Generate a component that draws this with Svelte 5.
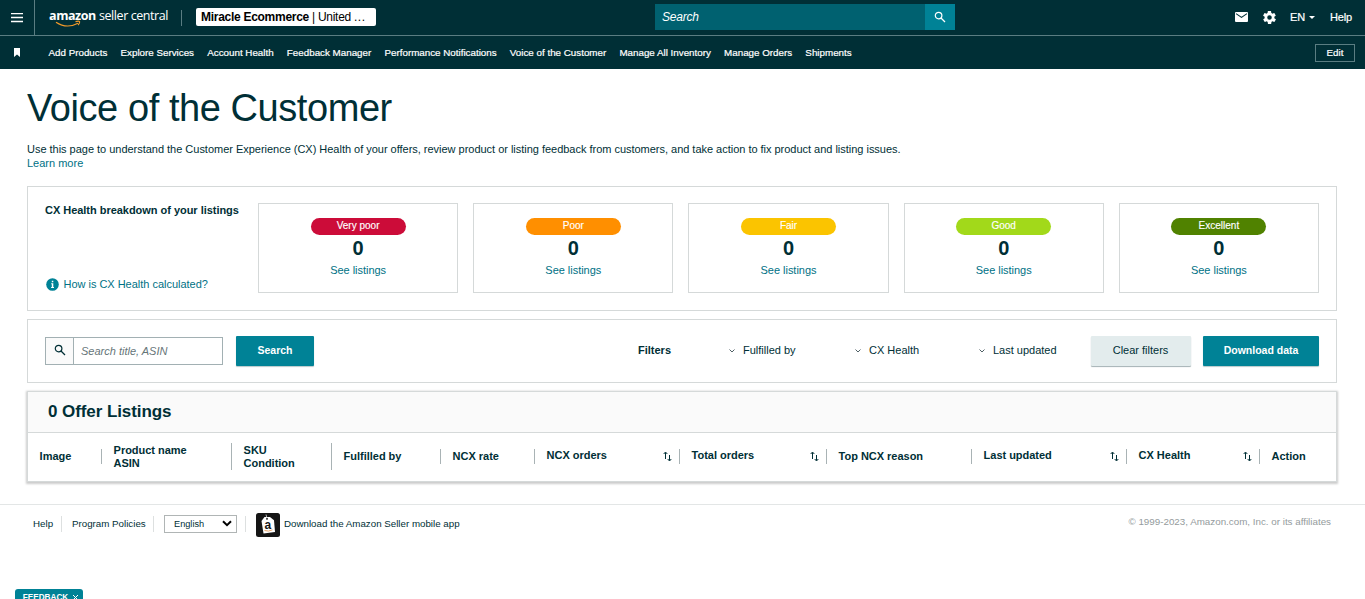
<script lang="ts">
	interface Rating {
		label: string;
		kind: string;
		count: number;
	}

	interface Column {
		lines: string[];
		sortable?: boolean;
	}

	const navLinks = [
		'Add Products',
		'Explore Services',
		'Account Health',
		'Feedback Manager',
		'Performance Notifications',
		'Voice of the Customer',
		'Manage All Inventory',
		'Manage Orders',
		'Shipments'
	];

	const ratings: Rating[] = [
		{ label: 'Very poor', kind: 'very-poor', count: 0 },
		{ label: 'Poor', kind: 'poor', count: 0 },
		{ label: 'Fair', kind: 'fair', count: 0 },
		{ label: 'Good', kind: 'good', count: 0 },
		{ label: 'Excellent', kind: 'excellent', count: 0 }
	];

	const filters = ['Fulfilled by', 'CX Health', 'Last updated'];

	const columns: Column[] = [
		{ lines: ['Image'] },
		{ lines: ['Product name', 'ASIN'] },
		{ lines: ['SKU', 'Condition'] },
		{ lines: ['Fulfilled by'] },
		{ lines: ['NCX rate'] },
		{ lines: ['NCX orders'], sortable: true },
		{ lines: ['Total orders'], sortable: true },
		{ lines: ['Top NCX reason'] },
		{ lines: ['Last updated'], sortable: true },
		{ lines: ['CX Health'], sortable: true },
		{ lines: ['Action'] }
	];

	let query = $state('');
	let title = $state('');
</script>

{#snippet magnifier()}
	<svg class="magnifier" viewBox="0 0 12 12" aria-hidden="true">
		<circle cx="4.6" cy="4.6" r="3.3" />
		<path d="M7 7l4 4" />
	</svg>
{/snippet}

<header>
	<div class="topbar">
		<button type="button" class="menu" aria-label="Menu">
			<svg width="12" height="10" viewBox="0 0 12 10"><path d="M0 .5h12M0 4.5h12M0 8.5h12" /></svg>
		</button>
		<a class="logo" href="#home">
			<b>amazon</b><span>seller central</span>
			<svg class="smile" width="27" height="8" viewBox="0 0 27 8">
				<path d="M1 2.2c7 4.6 15 4.8 22 1" />
				<path d="M20.5 1.6c2-.6 3.6-.6 4 0s-.2 2-1.4 3.6" />
			</svg>
		</a>
		<button type="button" class="account"><b>Miracle Ecommerce</b> | United <span>...</span></button>
		<form class="search">
			<input type="text" placeholder="Search" bind:value={query} />
			<button type="button" aria-label="Search">{@render magnifier()}</button>
		</form>
		<div class="tools">
			<svg class="mail" width="13" height="10" viewBox="0 0 13 10">
				<rect width="13" height="10" rx="1" fill="#fff" />
				<path d="M1 1.6l5.5 3.8L12 1.6" fill="none" stroke="#002f36" stroke-width="1.1" />
			</svg>
			<svg class="gear" width="13" height="13" viewBox="2 2 20 20">
				<path
					fill="#fff"
					d="M19.4 13c0-.3.1-.6.1-1s0-.7-.1-1l2.1-1.6c.2-.2.2-.4.1-.6l-2-3.5c-.1-.2-.4-.3-.6-.2l-2.5 1c-.5-.4-1.1-.7-1.7-1l-.4-2.6c0-.3-.2-.5-.5-.5h-4c-.2 0-.4.2-.5.4l-.4 2.7c-.6.2-1.1.6-1.7 1l-2.500-1c-.2-.1-.5 0-.6.2l-2 3.500c-.1.2-.1.5.1.6L4.6 11c0 .3-.1.6-.1 1s0 .7.1 1l-2.1 1.6c-.2.2-.2.4-.1.6l2 3.500c.1.2.4.3.6.2l2.500-1c.5.4 1.1.7 1.7 1l.4 2.6c0 .3.2.5.5.5h4c.2 0 .5-.2.5-.4l.4-2.7c.6-.2 1.1-.6 1.7-1l2.500 1c.2.1.5 0 .6-.2l2-3.500c.1-.2.1-.5-.1-.6zM12 15.5a3.5 3.5 0 1 1 0-7 3.500 3.500 0 0 1 0 7z"
				/>
			</svg>
			<span class="lang">EN<i></i></span>
			<span class="help">Help</span>
		</div>
	</div>
	<nav>
		<svg class="bookmark" width="6" height="9" viewBox="0 0 6 9"><path d="M0 0h6v9L3 6.5 0 9z" fill="#fff" /></svg>
		<ul>
			{#each navLinks as link}
				<li>{link}</li>
			{/each}
		</ul>
		<button type="button" class="edit">Edit</button>
	</nav>
</header>

<main>
	<h1>Voice of the Customer</h1>
	<p class="intro">
		Use this page to understand the Customer Experience (CX) Health of your offers, review product or listing
		feedback from customers, and take action to fix product and listing issues.
	</p>
	<a class="learn" href="#learn">Learn more</a>

	<section class="panel breakdown">
		<div class="about">
			<h2>CX Health breakdown of your listings</h2>
			<a href="#how">
				<svg width="13" height="13" viewBox="0 0 13 13">
					<circle cx="6.5" cy="6.5" r="6.3" fill="#008296" />
					<path d="M5.800 2.7h1.500v1.500H5.800zM5.200 5.300h2.100v3.800h.7v1H5.100v-1h.7V6.300h-.6z" fill="#fff" />
				</svg>
				<span>How is CX Health calculated?</span>
			</a>
		</div>
		{#each ratings as rating}
			<div class="card">
				<span class="pill {rating.kind}">{rating.label}</span>
				<strong>{rating.count}</strong>
				<a href="#listings">See listings</a>
			</div>
		{/each}
	</section>

	<section class="panel toolbar">
		<div class="field">
			<span class="addon">{@render magnifier()}</span>
			<input type="text" placeholder="Search title, ASIN" bind:value={title} />
		</div>
		<button type="button" class="primary find">Search</button>
		<b class="caption">Filters</b>
		<div class="filters">
			{#each filters as filter}
				<span class="filter">
					<svg width="6" height="4" viewBox="0 0 6 4"><path d="M.5.5L3 3 5.5.5" /></svg>
					{filter}
				</span>
			{/each}
		</div>
		<button type="button" class="clear">Clear filters</button>
		<button type="button" class="primary download">Download data</button>
	</section>

	<section class="listings">
		<h3>0 Offer Listings</h3>
		<div class="columns">
			{#each columns as column}
				<div class="column" class:sortable={column.sortable} class:tall={column.lines.length > 1}>
					<div>
						{#each column.lines as line}
							<div>{line}</div>
						{/each}
					</div>
					{#if column.sortable}
						<svg width="9" height="11" viewBox="0 0 9 11">
							<path d="M2.5 8V1.500M.7 3L2.500 1l1.800 2M6.500 4v5.500M4.700 8l1.800 2 1.800-2" />
						</svg>
					{/if}
				</div>
			{/each}
		</div>
	</section>
</main>

<footer>
	<span class="item first">Help</span>
	<span class="item policies">Program Policies</span>
	<span class="item language">
		<button type="button">
			English
			<svg width="10" height="7" viewBox="0 0 10 7"><path d="M1 1.2l4 4 4-4" /></svg>
		</button>
	</span>
	<svg class="app" width="24" height="24" viewBox="0 0 24 24">
		<rect width="24" height="24" rx="2.5" fill="#151515" />
		<path d="M5.500 8l3-4h5.500l4 3.200L19 19 7.500 20.500z" fill="#fff" />
		<circle cx="11" cy="5.800" r="1" fill="#151515" />
		<path d="M11 5.500L10 1.500" stroke="#ddd" stroke-width=".8" />
		<text x="8.600" y="15.500">a</text>
		<path d="M8.500 17.500q4 1.500 8-.7" fill="none" stroke="#e8a66b" />
	</svg>
	<span class="mobile">Download the Amazon Seller mobile app</span>
	<span class="copyright">© 1999-2023, Amazon.com, Inc. or its affiliates</span>
</footer>

<button type="button" class="feedback">
	FEEDBACK
	<svg width="7" height="7" viewBox="0 0 7 7"><path d="M1 1l5 5M6 1L1 6" /></svg>
</button>

<style>
	:global(body) {
		height: 599px;
		overflow: hidden;
		font-family: 'Liberation Sans', Arial, sans-serif;
		font-size: 11px;
		color: #002f36;
		background: #fff;
	}

	:global(#app *) {
		box-sizing: border-box;
	}

	button,
	input {
		margin: 0;
		padding: 0;
		border: 0;
		border-radius: 0;
		outline: 0;
		font: inherit;
		color: inherit;
		background: none;
	}

	a {
		color: #007185;
		text-decoration: none;
	}

	.magnifier {
		width: 12px;
		height: 12px;
		fill: none;
		stroke: currentColor;
		stroke-width: 1.2;
	}

	header {
		color: #fff;
		background: #002f36;
	}

	.topbar {
		display: flex;
		align-items: center;
		height: 36px;
		border-bottom: 1px solid #5a7d82;
	}

	.menu {
		display: flex;
		align-items: center;
		justify-content: center;
		width: 35px;
		height: 35px;
		border-right: 1px solid #5a7d82;

		& svg {
			stroke: #fff;
			stroke-width: 1.3;
		}
	}

	.logo {
		position: relative;
		display: flex;
		gap: 3px;
		width: 133px;
		height: 16px;
		margin-left: 14px;
		border-right: 1px solid #5a7d82;
		font-family: 'Open Sans', sans-serif;
		font-size: 12.5px;
		line-height: 12px;
		letter-spacing: -0.42px;
		white-space: nowrap;
		color: #fff;
	}

	.smile {
		position: absolute;
		left: 6px;
		top: 10px;
		fill: none;
		stroke: #f19a2a;
		stroke-width: 1.2;
	}

	.account {
		width: 180px;
		height: 18px;
		margin: 0 0 1px 14px;
		padding-left: 5px;
		border-radius: 2px;
		font-size: 12px;
		line-height: 17px;
		letter-spacing: -0.28px;
		text-align: left;
		white-space: nowrap;
		color: #000;
		background: #fff;

		& span {
			letter-spacing: 0.5px;
		}
	}

	.search {
		display: flex;
		width: 300px;
		height: 26px;
		margin: 0 0 2px 279px;

		& input {
			width: 270px;
			padding-left: 7px;
			font-size: 12px;
			font-style: italic;
			letter-spacing: -0.2px;
			background: #006170;
		}

		& input::placeholder {
			color: #fff;
			opacity: 1;
		}

		& button {
			display: flex;
			align-items: center;
			justify-content: center;
			width: 30px;
			background: #008296;
		}
	}

	.tools {
		display: flex;
		align-items: center;
		margin: 0 0 1px 280px;
		font-size: 11px;
		-webkit-text-stroke: 0.2px;
	}

	.gear {
		margin-left: 15px;
	}

	.lang {
		display: flex;
		align-items: center;
		width: 40px;
		margin-left: 14px;

		& i {
			margin-left: 4px;
			border: 3px solid transparent;
			border-top-color: #fff;
			border-bottom: 0;
		}
	}

	.help {
		letter-spacing: -0.15px;
	}

	nav {
		display: flex;
		align-items: center;
		height: 33px;
		padding: 0 10px 0 14px;

		& ul {
			display: flex;
			gap: 13.2px;
			margin: 0 0 0 28.5px;
			padding: 0;
			list-style: none;
			font-size: 9.8px;
			white-space: nowrap;
			-webkit-text-stroke: 0.2px;
		}
	}

	.edit {
		width: 40px;
		height: 18px;
		margin-left: auto;
		border: 1px solid #5a7d82;
		font-size: 9.8px;
		-webkit-text-stroke: 0.2px;
	}

	main {
		padding: 17px 28px 0 27px;
	}

	h1 {
		margin: 0;
		font-size: 38px;
		font-weight: 400;
		line-height: 44px;
		letter-spacing: -0.43px;
		white-space: nowrap;
	}

	.intro {
		margin: 12px 0 0;
		line-height: 14px;
		letter-spacing: -0.02px;
		white-space: nowrap;
	}

	.learn {
		display: block;
		line-height: 14px;
	}

	.panel {
		border: 1px solid #d5d9d9;
	}

	.breakdown {
		display: flex;
		gap: 15px;
		height: 125px;
		margin-top: 16px;
		padding: 16px 17px;
	}

	.about {
		display: flex;
		flex-direction: column;
		justify-content: space-between;
		width: 198px;
		height: 90px;
		white-space: nowrap;

		& h2 {
			margin: 0;
			font-size: 11px;
			line-height: 14px;
			letter-spacing: -0.03px;
		}

		& a {
			display: flex;
			align-items: center;
			gap: 4.5px;
			margin: 0 0 2px 1px;
			letter-spacing: -0.02px;
		}

		& span {
			margin-bottom: 1px;
		}
	}

	.card {
		display: flex;
		flex: 1;
		flex-direction: column;
		align-items: center;
		height: 90px;
		padding-top: 14px;
		border: 1px solid #d5d9d9;

		& strong {
			margin: 1px 0 4px;
			font-size: 20px;
			line-height: 24px;
		}

		& a {
			line-height: 13px;
			letter-spacing: -0.03px;
		}
	}

	.pill {
		width: 95px;
		height: 17px;
		border-radius: 9px;
		font-size: 10px;
		line-height: 16px;
		text-align: center;
		color: #fff;
		-webkit-text-stroke: 0.15px;

		&.very-poor {
			background: #cc0c39;
		}

		&.poor {
			background: #ff8f00;
		}

		&.fair {
			background: #fbc400;
		}

		&.good {
			background: #a2d91a;
		}

		&.excellent {
			background: #508200;
		}
	}

	.toolbar {
		display: flex;
		align-items: center;
		height: 64px;
		margin-top: 8px;
		padding: 0 17px;
		white-space: nowrap;
	}

	.field {
		display: flex;
		width: 178px;
		height: 28px;
		border: 1px solid #a2b0b3;

		& input {
			flex: 1;
			min-width: 0;
			padding-left: 7px;
			font-style: italic;
		}

		& input::placeholder {
			color: #667578;
			opacity: 1;
		}
	}

	.addon {
		display: flex;
		align-items: center;
		justify-content: center;
		width: 28px;
		padding-bottom: 2px;
		border-right: 1px solid #a2b0b3;
		background: #fafafa;
	}

	.primary {
		height: 30px;
		padding-bottom: 2px;
		border-radius: 1px;
		font-size: 10.5px;
		font-weight: 700;
		color: #fff;
		background: #008296;
		box-shadow: 0 1px 1px #b8c8ca;
	}

	.find {
		width: 78px;
		margin-left: 13px;
	}

	.caption {
		width: 91px;
		margin: 0 0 2px 324px;
	}

	.filters {
		display: grid;
		grid-template-columns: 126px 124px 111.5px;
		margin-bottom: 2px;
	}

	.filter {
		display: flex;
		align-items: center;
		gap: 8px;

		& svg {
			margin-top: 2px;
			fill: none;
			stroke: #506166;
		}
	}

	.clear {
		width: 100px;
		height: 30px;
		padding-bottom: 2px;
		border-radius: 1px;
		background: #e3eced;
		box-shadow: 0 1px 1px #a4b1b4;
	}

	.download {
		width: 116px;
		margin-left: auto;
	}

	.listings {
		height: 91px;
		margin-top: 8px;
		border: 1px solid #d5d9d9;
		box-shadow: 0 1px 2px 1px #ccc;

		& h3 {
			height: 41px;
			margin: 0;
			padding-left: 20px;
			border-bottom: 1px solid #d5d9d9;
			font-size: 17px;
			line-height: 39px;
			letter-spacing: -0.08px;
			background: #fafafa;
		}
	}

	.columns {
		display: grid;
		grid-template-columns: 74px 130px 100px 109px 94px 145px 147px 145px 155px 133px 1fr;
		align-items: center;
		height: 47px;
		font-weight: 700;
		line-height: 13px;
		letter-spacing: -0.02px;
		white-space: nowrap;
	}

	.column {
		display: flex;
		align-items: center;
		height: 15px;
		padding-left: 11.6px;
		border-right: 1px solid #a9b3b5;

		&.tall {
			height: 27px;
		}

		&.sortable {
			justify-content: space-between;
			padding-right: 7px;

			& > div {
				margin-bottom: 2px;
			}
		}

		&:last-child {
			border-right: 0;
		}

		& svg {
			fill: none;
			stroke: #002f36;
		}
	}

	footer {
		display: flex;
		align-items: center;
		height: 39px;
		margin-top: 22px;
		padding: 0 34px 0 33px;
		border-top: 1px solid #e3e6e6;
		font-size: 9.75px;
		white-space: nowrap;
	}

	.item {
		display: flex;
		align-items: center;
		height: 16px;
		padding-bottom: 1px;
		border-right: 1px solid #dde0e0;
	}

	.first {
		width: 29px;
	}

	.policies {
		width: 92px;
		padding-left: 10px;
	}

	.language {
		width: 92px;
		padding: 0 0 0 10px;

		& button {
			display: flex;
			align-items: center;
			justify-content: space-between;
			width: 73px;
			height: 18px;
			padding: 0 4px 1px 9px;
			border: 1px solid #b0b5b5;
			font-size: 9.2px;
		}

		& svg {
			fill: none;
			stroke: #000;
			stroke-width: 2;
		}
	}

	.app {
		margin: 1px 4px 0 10px;

		& text {
			font-size: 12px;
			font-weight: 700;
			fill: #151515;
		}
	}

	.mobile {
		margin-bottom: 2px;
	}

	.copyright {
		margin: 0 0 6px auto;
		font-size: 9.8px;
		color: #949b9d;
	}

	.feedback {
		position: fixed;
		left: 15px;
		top: 589px;
		display: flex;
		align-items: center;
		justify-content: center;
		gap: 4px;
		width: 68px;
		height: 17px;
		padding-left: 4px;
		border-radius: 3px 3px 0 0;
		font-size: 8.2px;
		font-weight: 700;
		color: #fff;
		background: #008296;

		& svg {
			fill: none;
			stroke: #fff;
		}
	}
</style>
